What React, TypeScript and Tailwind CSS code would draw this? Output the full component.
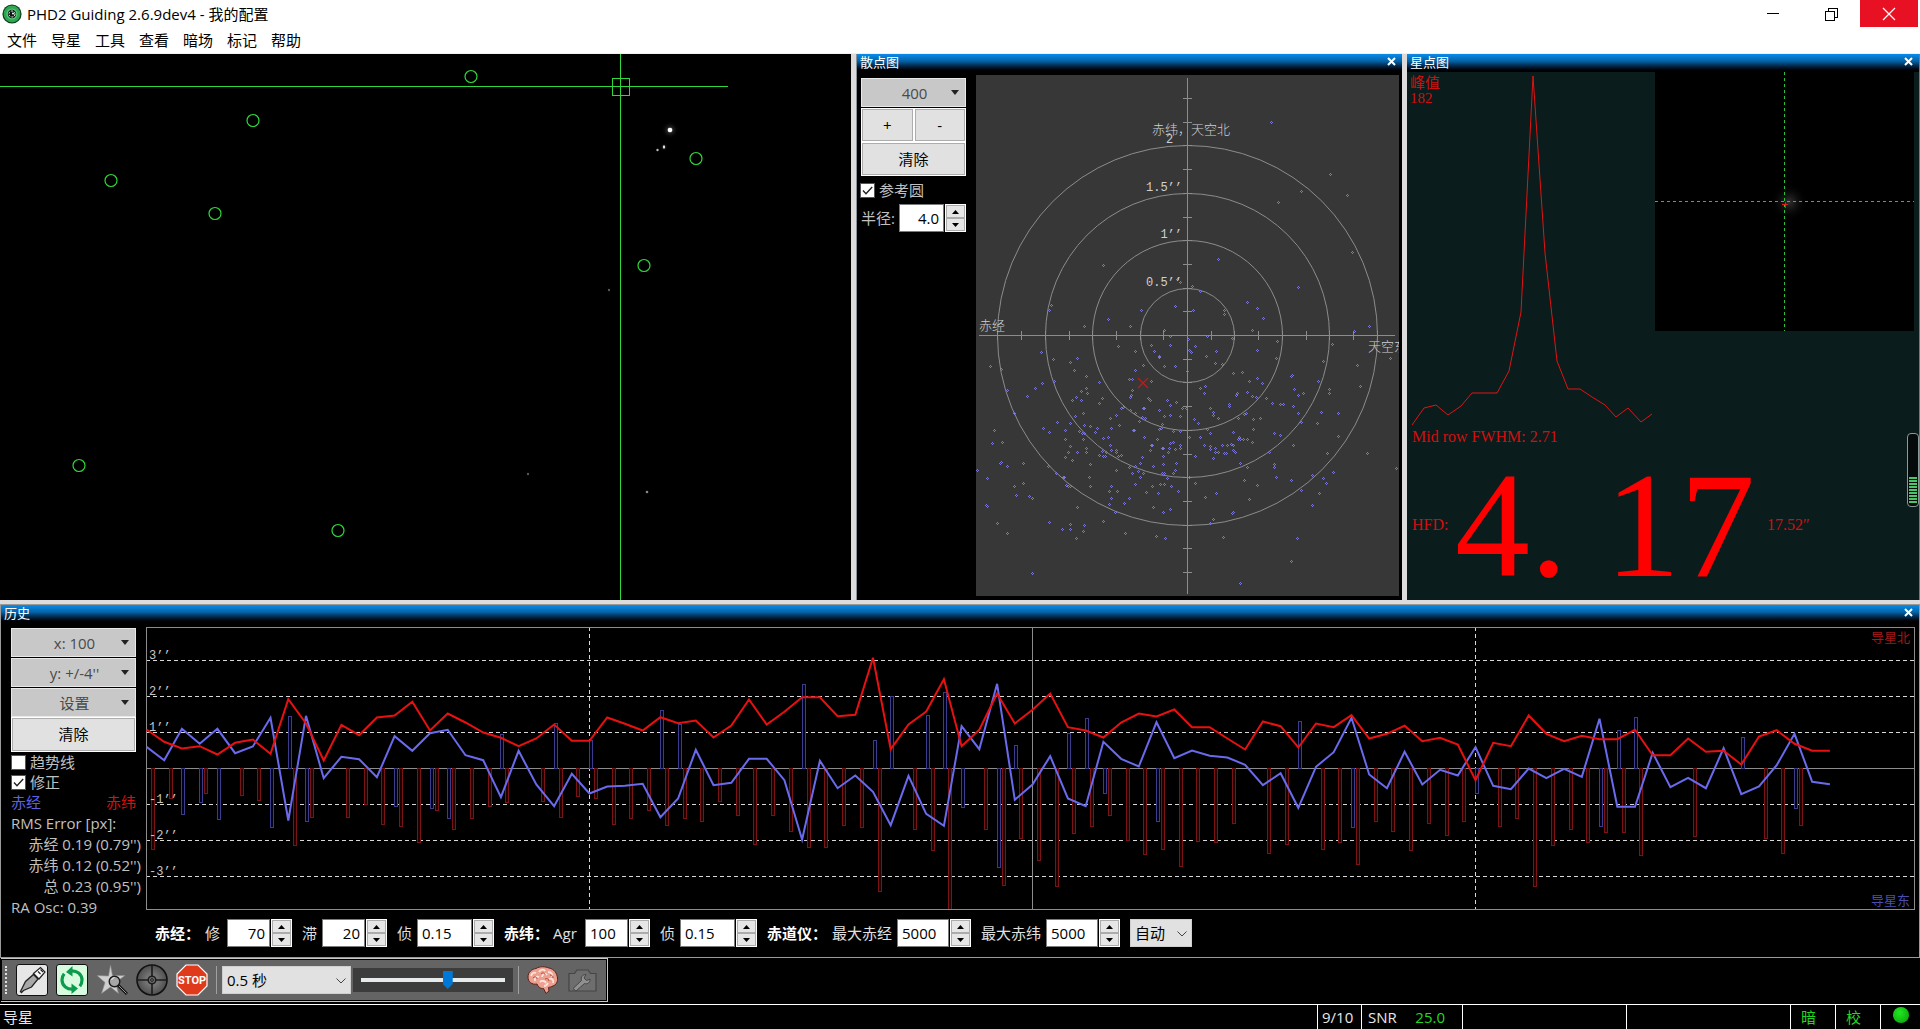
import React from "react";

const ui = "font-['Open_Sans','Noto_Sans_CJK_SC',sans-serif]";

/* ---------- shared controls ---------- */

function Caption({ title }: { title: string }) {
  return (
    <header className="flex h-[18px] shrink-0 items-start justify-between bg-linear-to-b from-[#0a8cea] via-[#0562a6] via-40% to-black pr-1 pl-[3px] text-white">
      <h2 className="text-[13px] leading-4 font-normal">{title}</h2>
      <button type="button" aria-label={`关闭${title}`} className="mt-0.5 size-3 cursor-default">
        <svg viewBox="0 0 12 12" className="size-3" stroke="#fff" strokeWidth="2">
          <path d="M2 2l7 7M9 2l-7 7" />
        </svg>
      </button>
    </header>
  );
}

function DropButton({ label }: { label: string }) {
  return (
    <button type="button" className="flex h-[29px] w-full items-center border border-[#e8e8e8] bg-[#c8c8c8] leading-6 text-[#4a4a4a]">
      <span className="flex-1 pl-4 text-center">{label}</span>
      <svg viewBox="0 0 8 5" className="mr-1.5 h-[5px] w-2" fill="#222">
        <path d="M0 0h8L4 5z" />
      </svg>
    </button>
  );
}

function PlainButton({ children, className = "" }: { children: React.ReactNode; className?: string }) {
  return (
    <button type="button" className={`flex items-center justify-center border border-white bg-[#e1e1e1] text-black inset-ring inset-ring-[#adadad] ${className}`}>
      {children}
    </button>
  );
}

function Check({ label, checked = false }: { label: string; checked?: boolean }) {
  return (
    <label className="flex h-5 items-center gap-1 leading-5 text-[#c0c0c0]">
      <span className="relative size-[15px]">
        <input type="checkbox" defaultChecked={checked} className="peer block size-[15px] appearance-none border border-[#555] bg-white" />
        <svg viewBox="0 0 15 15" className="pointer-events-none absolute top-0 left-0 hidden size-[15px] peer-checked:block" fill="none" stroke="#222" strokeWidth="1.4">
          <path d="M3 7.5l3 3.2L12.2 4" />
        </svg>
      </span>
      {label}
    </label>
  );
}

function Spin({ name, value, width, right = false }: { name: string; value: string; width: string; right?: boolean }) {
  return (
    <span className="flex h-7 gap-px">
      <input
        type="text"
        aria-label={name}
        defaultValue={value}
        className={`h-7 border border-[#7a7a7a] bg-white px-1 text-black ${width} ${right ? "text-right" : ""}`}
      />
      <span className="flex w-[21px] flex-col border border-white bg-[#e6e6e6]">
        <button type="button" aria-label={`${name} 增加`} className="flex flex-1 items-center justify-center border border-[#acacac]">
          <svg viewBox="0 0 7 4" className="h-1 w-[7px]"><path d="M0 4h7L3.5 0z" /></svg>
        </button>
        <button type="button" aria-label={`${name} 减少`} className="flex flex-1 items-center justify-center border border-[#acacac]">
          <svg viewBox="0 0 7 4" className="h-1 w-[7px]"><path d="M0 0h7L3.5 4z" /></svg>
        </button>
      </span>
    </span>
  );
}

function Select({ name, options, className }: { name: string; options: string[]; className: string }) {
  return (
    <span className={`relative ${className}`}>
      <select aria-label={name} className="h-full w-full appearance-none border border-[#cfcfcf] bg-[#e1e1e1] pl-1 leading-6 text-black">
        {options.map((o) => (
          <option key={o}>{o}</option>
        ))}
      </select>
      <svg viewBox="0 0 10 6" className="pointer-events-none absolute top-3 right-[5px] h-1.5 w-2.5" fill="none" stroke="#444">
        <path d="M.5.5L5 5 9.5.5" />
      </svg>
    </span>
  );
}

/* ---------- title bar and menu ---------- */

function TitleBar() {
  return (
    <header className="flex h-7 shrink-0 bg-white text-black">
      <div className="flex flex-1 items-center gap-[5px] pl-0.5">
        <svg viewBox="0 0 20 20" className="size-5">
          <circle cx="10" cy="10" r="9.6" fill="#0b3d1c" />
          <circle cx="10" cy="10" r="8.4" fill="#2fa552" />
          <circle cx="10" cy="10" r="5.6" fill="#57c878" />
          <circle cx="10" cy="10" r="4.2" fill="#0a1a10" />
          <circle cx="10" cy="10" r="3" fill="none" stroke="#fff" strokeWidth="1" strokeDasharray="2 1.2" />
          <circle cx="11" cy="9.5" r="1" fill="#fff" />
        </svg>
        <h1 className="text-[15px] leading-6 font-normal">PHD2 Guiding 2.6.9dev4 - 我的配置</h1>
      </div>
      <button type="button" aria-label="最小化" className="flex w-[58px] items-center justify-center">
        <svg viewBox="0 0 12 12" className="size-3" stroke="#000" shapeRendering="crispEdges"><path d="M0 5.5h12" /></svg>
      </button>
      <button type="button" aria-label="还原" className="flex w-[58px] items-center justify-center">
        <svg viewBox="0 0 13 13" className="size-[13px]" fill="none" stroke="#000" shapeRendering="crispEdges">
          <path d="M.5 3.5h9v9h-9zM3 3V.5h9.500v9H10" />
        </svg>
      </button>
      <button type="button" aria-label="关闭" className="mr-0.5 flex h-[27px] w-[58px] items-center justify-center bg-[#e81123]">
        <svg viewBox="0 0 14 14" className="size-3.5" stroke="#fff" strokeWidth="1.2"><path d="M1 1l12 12M13 1L1 13" /></svg>
      </button>
    </header>
  );
}

function Menu() {
  return (
    <nav className="flex h-[26px] shrink-0 items-center gap-3.5 border-b border-[#f0f0f0] bg-white pb-px pl-[7px] text-black">
      {["文件", "导星", "工具", "查看", "暗场", "标记", "帮助"].map((m) => (
        <button key={m} type="button" className="leading-6">{m}</button>
      ))}
    </nav>
  );
}

/* ---------- camera view ---------- */

const STARS = [[471, 22], [253, 66], [111, 126], [215, 159], [696, 104], [644, 211], [79, 411], [338, 476]];

function CameraView() {
  return (
    <section aria-label="相机图像" className="min-w-0 flex-1 overflow-hidden bg-black">
      <svg viewBox="0 0 851 546" preserveAspectRatio="xMinYMin slice" className="h-full w-full" fill="none">
        <defs>
          <radialGradient id="halo">
            <stop offset="0" stopColor="#fff" stopOpacity=".55" />
            <stop offset=".4" stopColor="#888" stopOpacity=".2" />
            <stop offset="1" stopColor="#000" stopOpacity="0" />
          </radialGradient>
        </defs>
        <circle cx="670" cy="76" r="9" fill="url(#halo)" />
        <circle cx="670" cy="76" r="2.300" fill="#fff" />
        <circle cx="664" cy="93" r="4" fill="url(#halo)" />
        <ellipse cx="664" cy="93" rx="1" ry="1.700" fill="#eee" />
        <circle cx="657.5" cy="96" r="1.200" fill="#bbb" />
        <circle cx="609" cy="236" r="1.200" fill="#555" />
        <circle cx="528" cy="420" r="1.200" fill="#555" />
        <circle cx="647" cy="438" r="1.300" fill="#888" />
        <g stroke="#2fd83a" shapeRendering="crispEdges">
          <path d="M0 32.5H728M620.5 0V546" />
          <rect x="612.5" y="24.500" width="17" height="17" />
        </g>
        <g stroke="#2fd83a" strokeWidth="1.200">
          {STARS.map(([x, y]) => <circle key={x} cx={x} cy={y + 0.5} r="6" />)}
        </g>
      </svg>
    </section>
  );
}

/* ---------- scatter plot ---------- */

const SCATTER_UNIT = 2.851;
const SCATTER =
  "1199,204 1368,354 1285,401 1418,412 1221,432 1432,577 722,614 1048,597 1276,674 933,652 942,662 976,672 997,688 574,726 566,742 828,742 925,731 979,742 1133,717 1161,734 1065,742 1065,753 1176,763 734,768 668,788 797,788 896,797 911,814 1017,814 1147,797 1436,802 1479,788 1090,822 1216,828 962,824 763,845 811,859 857,842 866,859 911,840 982,845 1042,859 1159,854 1375,839 544,862 578,882 628,890 648,879 400,902 431,909 637,913 880,874 881,873 836,897 811,913 896,902 925,902 1014,871 965,854 973,862 1039,893 1060,894 1213,879 1347,885 1444,897 1538,879 960,916 674,930 711,947 794,937 805,939 859,942 1093,922 1116,919 1136,942 1161,934 1173,948 1257,928 1261,925 1333,942 1453,957 580,943 546,950 526,962 448,968 503,985 657,972 674,962 676,979 643,988 634,999 657,999 709,1005 717,993 805,970 800,982 799,990 849,991 854,999 903,999 928,1002 913,1013 997,962 1013,957 1008,979 1102,979 1099,983 1133,976 1145,987 1156,988 1187,993 1204,1005 1225,1008 1233,1010 1262,1016 1267,967 1276,982 1290,979 1364,967 1366,979 779,1017 773,1021 797,1026 811,1034 834,1020 839,1021 831,1045 823,1057 842,1048 757,1039 740,1050 665,1036 640,1042 626,1062 468,1036 591,1059 882,1027 896,1044 911,1039 945,1019 957,1021 942,1042 1027,1021 1036,1040 1048,1049 1034,1033 1079,1008 1079,1014 1128,1034 1122,1038 1107,1048 1148,1053 1170,1050 1276,1034 1344,1033 1390,1036 1330,1062 1285,1061 980,1053 991,1062 888,1065 882,1079 886,1077 808,1083 809,1084 745,1076 766,1070 705,1076 683,1073 668,1070 551,1076 566,1090 411,1084 406,1121 434,1116 614,1084 614,1110 652,1087 660,1093 665,1110 668,1093 697,1090 722,1107 734,1104 740,1127 729,1145 722,1156 743,1139 757,1139 757,1147 771,1154 763,1156 839,1102 874,1110 857,1127 862,1127 854,1140 888,1133 893,1133 908,1133 911,1121 925,1136 940,1125 940,1133 922,1116 922,1087 942,1087 905,1147 893,1157 965,1102 997,1102 1017,1079 1025,1093 1093,1090 1110,1104 1113,1109 1121,1109 1133,1110 1107,1110 1145,1116 1093,1127 1093,1139 1085,1122 1074,1127 1060,1127 1039,1133 1050,1147 1041,1146 1027,1136 1027,1128 1008,1127 1071,1150 1096,1147 1065,1149 1036,1164 982,1156 1150,1079 1210,1093 1227,1098 1390,1099 1264,1125 1195,1145 1361,1150 1473,1150 1557,1192 626,1130 622,1147 614,1161 632,1170 646,1147 674,1133 674,1147 711,1155 717,1142 731,1147 726,1157 426,1178 431,1173 446,1187 494,1178 361,1197 390,1221 494,1233 468,1244 474,1267 511,1270 518,1278 388,1298 389,1299 563,1187 586,1207 608,1217 609,1218 617,1241 628,1244 622,1242 683,1181 680,1218 683,1244 757,1196 794,1190 831,1159 826,1176 811,1187 820,1201 805,1207 826,1216 834,1207 811,1236 865,1187 893,1181 888,1207 894,1207 903,1221 928,1176 925,1196 922,1207 885,1236 896,1238 916,1244 936,1256 862,1244 845,1261 877,1264 965,1216 982,1233 1113,1178 1133,1190 1210,1181 1213,1216 1124,1227 1161,1241 1256,1227 1285,1253 1316,1210 1349,1221 1358,1235 1376,1204 1338,1264 1316,1296 1136,1281 1042,1264 1011,1273 1093,1316 1090,1321 1036,1336 1025,1347 1062,1387 745,1244 737,1258 760,1258 743,1278 737,1293 780,1290 794,1276 754,1318 722,1342 865,1304 893,1318 913,1307 648,1304 668,1353 665,1372 643,1392 628,1350 626,1364 603,1364 568,1344 420,1347 448,1376 783,1376 871,1384 899,1390 1273,1390 1256,1458 1113,1518 518,1492 1210,1188"
    .split(" ")
    .map((p) => p.split(",").map(Number));

const scatterPath = SCATTER.map(([px, py]) => {
  const x = Math.round((px - 359) / SCATTER_UNIT);
  const y = Math.round((py - 71) / SCATTER_UNIT);
  return `M${x} ${y - 1}h1v1h-1zM${x - 1} ${y}h1v1h-1zM${x + 1} ${y}h1v1h-1zM${x} ${y + 1}h1v1h-1z`;
}).join("");

const TICKS = [-10, -9, -7, -6, -5, -3, -2, -1, 1, 2, 3, 5, 6, 7, 9, 10, -8, -4, 4, 8];

function ScatterPanel() {
  return (
    <section aria-label="散点图" className="flex w-[546px] shrink-0 flex-col border-l border-[#8a929a] bg-black">
      <Caption title="散点图" />
      <div className="flex min-h-0 flex-1 pt-[3px] pb-1">
        <div className="flex w-[119px] shrink-0 flex-col pt-[3px]">
          <div className="mr-2.5 ml-1 flex flex-col">
            <DropButton label="400" />
            <div className="mt-px grid grid-cols-2">
              <PlainButton className="h-[34px]">+</PlainButton>
              <PlainButton className="h-[34px]">-</PlainButton>
            </div>
            <PlainButton className="h-[34px] w-full">清除</PlainButton>
          </div>
          <div className="mt-1 ml-[3px]">
            <Check label="参考圆" checked />
          </div>
          <div className="mt-1 ml-1 flex items-center gap-1 text-[#c0c0c0]">
            <span className="w-[34px] leading-7 whitespace-nowrap">半径:</span>
            <Spin name="半径" value="4.0" width="w-[45px]" right />
          </div>
        </div>
        <div className="mr-[3px] min-w-0 flex-1 overflow-hidden bg-[#373737]">
          <svg viewBox="0 0 423 521" className="h-full w-full" preserveAspectRatio="xMidYMid meet">
            <g fill="none" stroke="#8c8c8c">
              {[47, 95, 142, 190].map((r) => <circle key={r} cx="211.500" cy="260.500" r={r} />)}
              <g shapeRendering="crispEdges">
                <path d="M211.500 3V519M3 260.500H419" />
                {TICKS.map((t) => {
                  const d = Math.round(t * 23.7);
                  return (
                    <React.Fragment key={t}>
                      <path d={`M207 ${260.5 + d}h9`} />
                      {Math.abs(t) < 9 && <path d={`M${211.5 + d} 256v9`} />}
                    </React.Fragment>
                  );
                })}
              </g>
            </g>
            <path d={scatterPath} fill="#7a76d8" shapeRendering="crispEdges" />
            <path d="M162 303l10 10M172 303l-10 10" stroke="#c01a1a" strokeWidth="1.200" />
            <g fill="#d0d0d0" fontFamily="'Liberation Mono','Noto Sans CJK SC',monospace" fontSize="12">
              <text x="190" y="68">2</text>
              <text x="206" y="116" textAnchor="end">1.5’’</text>
              <text x="206" y="163" textAnchor="end">1’’</text>
              <text x="206" y="211" textAnchor="end">0.5’’</text>
            </g>
            <g fill="#d0d0d0" fontFamily="'Noto Sans CJK SC',sans-serif" fontSize="13" fontWeight="300">
              <text x="176" y="59">赤纬，天空北</text>
              <text x="3" y="255">赤经</text>
              <text x="392" y="276">天空东</text>
            </g>
          </svg>
        </div>
      </div>
    </section>
  );
}

/* ---------- star profile ---------- */

function StarPanel() {
  return (
    <section aria-label="星点图" className="relative flex w-[513px] shrink-0 flex-col border-r border-[#777] bg-[#0a1c1b] text-[#f00808]">
      <Caption title="星点图" />
      <div className="flex">
        <div className="relative min-w-0 flex-1">
          <p className="absolute top-1 left-[3px] font-['Liberation_Serif','Noto_Sans_CJK_SC',serif] text-[15px] leading-[15px] text-[#d01010]">
            峰值
            <br />
            182
          </p>
          <svg viewBox="0 0 248 357" className="h-[357px] w-full" fill="none" stroke="#e01414">
            <path d="M5 353L17 336L29 333L41 343L54 334L65 321L78 321L90 321L102 299L114 240L126 4L138 181L150 289L161 317L173 317L185 325L198 333L209 345L221 336L234 350L245 342" />
          </svg>
        </div>
        <svg viewBox="0 0 259 259" className="mr-[5px] h-[259px] w-[259px] shrink-0 bg-black">
          <defs>
            <radialGradient id="glow">
              <stop offset="0" stopColor="#333" />
              <stop offset="1" stopColor="#000" stopOpacity="0" />
            </radialGradient>
          </defs>
          <circle cx="134" cy="130" r="19" fill="url(#glow)" />
          <path d="M0 129.500H259M129.500 0V259" stroke="#2fc03a" strokeDasharray="3 3" shapeRendering="crispEdges" />
          <path d="M127 132.500h6M130.500 130v6" stroke="#e81a1a" shapeRendering="crispEdges" />
        </svg>
      </div>
      <p className="pl-[5px] font-['Liberation_Serif',serif] text-base leading-4 text-[#d01010]">Mid row FWHM: 2.71</p>
      <div className="mt-7 flex items-center font-['Liberation_Serif',serif] text-base text-[#d01010]">
        <span className="w-[48px] pl-[5px]">HFD:</span>
        <strong className="flex text-[150px] leading-[104px] font-normal text-[#ff0000]">
          {["4", ".", "1", "7"].map((c) => (
            <span key={c} className="w-[75px]">{c}</span>
          ))}
        </strong>
        <span className="pl-3">17.52″</span>
      </div>
      <div className="absolute right-0 bottom-[93px] flex h-[74px] w-3 flex-col justify-end gap-px rounded-sm border border-[#8a9a98] bg-black/60 p-px pb-[3px]">
        {Array.from({ length: 9 }, (_, i) => (
          <span key={i} className="h-0.5 bg-[#4cc46a]" />
        ))}
      </div>
    </section>
  );
}

/* ---------- history graph ---------- */

const STEP = 17.72;
const toY = (v: number) => (v - 97) / 3 + 0.5;

const DEC = [403, 440, 460, 453, 478, 443, 433, 476, 312, 385, 496, 389, 420, 367, 361, 320, 406, 355, 382, 412, 428, 453, 430, 388, 437, 437, 367, 386, 406, 366, 384, 376, 427, 391, 313, 388, 350, 306, 306, 363, 359, 188, 462, 388, 349, 252, 453, 404, 295, 385, 344, 295, 396, 406, 427, 382, 355, 364, 343, 396, 396, 430, 463, 379, 393, 457, 385, 396, 360, 430, 416, 392, 438, 428, 448, 555, 443, 453, 361, 416, 438, 422, 432, 432, 404, 480, 480, 430, 470, 467, 508, 424, 405, 446, 467, 467];
const RA = [455, 495, 401, 446, 401, 474, 454, 368, 676, 362, 549, 485, 492, 546, 423, 467, 414, 404, 480, 495, 606, 467, 568, 633, 536, 595, 574, 572, 566, 666, 610, 464, 570, 563, 491, 491, 555, 733, 497, 579, 541, 590, 690, 542, 656, 692, 393, 462, 266, 614, 568, 483, 610, 633, 440, 491, 514, 381, 489, 466, 482, 487, 509, 570, 534, 638, 515, 471, 368, 538, 579, 470, 568, 524, 541, 456, 572, 582, 520, 549, 521, 545, 371, 635, 635, 473, 576, 548, 579, 459, 597, 574, 510, 416, 560, 567];

const RA_PULSES: [number, number][] = [[2, 659], [3, 623], [4, 674], [7, 697], [8, 364], [9, 680], [14, 634], [16, 640], [17, 671], [20, 418], [23, 385], [25, 436], [29, 346], [30, 388], [37, 268], [41, 436], [42, 306], [44, 361], [45, 292], [46, 637], [48, 818], [49, 451], [52, 415], [53, 370], [54, 596], [57, 680], [65, 379], [68, 697], [75, 596], [82, 695], [83, 406], [84, 367], [90, 427], [93, 640]];
const DEC_PULSES: [number, number][] = [[0, 764], [1, 611], [3, 597], [5, 602], [6, 617], [8, 752], [9, 668], [11, 668], [12, 629], [13, 688], [14, 695], [15, 743], [16, 647], [17, 704], [18, 671], [19, 635], [20, 623], [22, 620], [23, 668], [24, 605], [25, 611], [26, 688], [27, 671], [28, 647], [29, 692], [30, 671], [31, 680], [32, 620], [33, 662], [34, 748], [35, 662], [36, 710], [37, 758], [38, 758], [39, 692], [40, 698], [41, 890], [43, 704], [44, 767], [45, 943], [47, 704], [48, 872], [49, 731], [50, 797], [51, 875], [52, 716], [53, 695], [54, 662], [55, 737], [56, 779], [57, 764], [58, 815], [59, 740], [60, 743], [61, 686], [63, 776], [64, 749], [66, 764], [67, 743], [68, 809], [69, 680], [70, 710], [71, 767], [72, 686], [73, 722], [74, 680], [76, 695], [77, 671], [78, 875], [79, 752], [80, 704], [81, 743], [82, 713], [83, 713], [84, 782], [87, 725], [91, 731], [92, 776], [93, 692]];

const linePath = (d: number[]) => d.map((v, i) => `${i ? "L" : "M"}${(i * STEP + 0.5).toFixed(1)} ${toY(v).toFixed(1)}`).join("");
const pulsePath = (d: [number, number][], shift: number) =>
  d.map(([i, v]) => `M${Math.round(i * STEP) + shift + 0.5} 141.500h3V${Math.round(toY(v)) - 0.5}h-3z`).join("");

function HistoryGraph() {
  return (
    <svg viewBox="0 0 1769 283" preserveAspectRatio="none" className="h-[283px] min-w-0 flex-1" fill="none">
      <g shapeRendering="crispEdges">
        {[33, 69, 105, 177, 213, 249].map((y) => (
          <path key={y} d={`M0 ${y + 0.5}H1769`} stroke="#d8d8d8" strokeDasharray="4 3" />
        ))}
        <path d="M443.500 0V283M1329.500 0V283" stroke="#d8d8d8" strokeDasharray="4 3" />
        <path d="M0 141.500H1769M886.500 0V283" stroke="#8c8c8c" />
        <path d={pulsePath(RA_PULSES, 0)} stroke="#3c3c8c" fill="#00001c" />
        <path d={pulsePath(DEC_PULSES, 5)} stroke="#7a1414" fill="#1e0000" />
        <rect x=".5" y=".5" width="1768" height="282" stroke="#8c8c8c" />
      </g>
      <g fill="#c8c8c8" fontFamily="'Liberation Mono',monospace" fontSize="12">
        <text x="3" y="32">3’’</text>
        <text x="3" y="68">2’’</text>
        <text x="3" y="104">1’’</text>
        <text x="3" y="176">-1’’</text>
        <text x="3" y="212">-2’’</text>
        <text x="3" y="248">-3’’</text>
      </g>
      <path d={linePath(RA)} stroke="#6a6aee" strokeWidth="2" />
      <path d={linePath(DEC)} stroke="#e81010" strokeWidth="2" />
      <g fontFamily="'Noto Sans CJK SC',sans-serif" fontSize="13" textAnchor="end">
        <text x="1764" y="15" fill="#a01818">导星北</text>
        <text x="1764" y="278" fill="#4c4cb0">导星东</text>
      </g>
    </svg>
  );
}

function HistoryPanel() {
  return (
    <section aria-label="历史" className="flex shrink-0 flex-col border-x border-t border-b border-[#9a9a9a] bg-black text-[#c0c0c0]">
      <Caption title="历史" />
      <div className="flex pt-1 pr-1">
        <div className="flex w-[145px] shrink-0 flex-col pt-px">
          <div className="mr-2.5 ml-2.5 flex flex-col">
            <div className="flex flex-col gap-px">
              <DropButton label="x: 100" />
              <DropButton label={"y: +/-4''"} />
              <DropButton label="设置" />
            </div>
            <PlainButton className="h-[35px] w-full">清除</PlainButton>
            <div>
              <Check label="趋势线" />
              <Check label="修正" checked />
            </div>
            <div className="flex justify-between leading-[21px]">
              <span className="text-[#6060e0]">赤经</span>
              <span className="text-[#d81010]">赤纬</span>
            </div>
          </div>
          <div className="ml-2.5 leading-[21px]">
            <p>RMS Error [px]:</p>
            <div className="pr-[5px] text-right">
              <p>赤经 0.19 (0.79'')</p>
              <p>赤纬 0.12 (0.52'')</p>
              <p>总 0.23 (0.95'')</p>
            </div>
            <p>RA Osc: 0.39</p>
          </div>
        </div>
        <div className="min-w-0 flex-1">
          <div className="flex"><HistoryGraph /></div>
          <div className="mt-[9px] mb-2.5 flex items-center pl-[9px] text-[#e0e0e0]">
            <b className="w-[50px] leading-7 text-white">赤经：</b>
            <span className="w-[22px] leading-7">修</span>
            <Spin name="赤经修" value="70" width="w-[43px]" right />
            <span className="ml-2.5 w-5 leading-7">滞</span>
            <Spin name="赤经滞" value="20" width="w-[43px]" right />
            <span className="ml-2.5 w-5 leading-7">侦</span>
            <Spin name="赤经侦" value="0.15" width="w-[55px]" />
            <b className="ml-2.5 w-[49px] leading-7 text-white">赤纬：</b>
            <span className="w-8 leading-7">Agr</span>
            <Spin name="赤纬 Agr" value="100" width="w-[43px]" />
            <span className="ml-2.5 w-5 leading-7">侦</span>
            <Spin name="赤纬侦" value="0.15" width="w-[55px]" />
            <b className="ml-2.5 w-[65px] leading-7 text-white">赤道仪：</b>
            <span className="w-[65px] leading-7">最大赤经</span>
            <Spin name="最大赤经" value="5000" width="w-[52px]" />
            <span className="ml-2.5 w-[65px] leading-7">最大赤纬</span>
            <Spin name="最大赤纬" value="5000" width="w-[52px]" />
            <Select name="赤纬模式" options={["自动", "关", "北", "南"]} className="ml-2.5 h-7 w-[62px]" />
          </div>
        </div>
      </div>
    </section>
  );
}

/* ---------- toolbar ---------- */

function ConnectIcon() {
  return (
    <svg viewBox="0 0 32 32" className="size-8">
      <rect x=".5" y=".5" width="31" height="31" rx="2.500" fill="#e6e6e6" stroke="#111" />
      <path d="M4.500 27.500l5-10 8-7 4.500 4.500-6.500 8-8 3.500-2 2z" fill="#a8a8a8" stroke="#222" strokeWidth="1.300" />
      <path d="M17.500 9.500l7-6 4.500 4.500-6 7z" fill="#fafafa" stroke="#222" strokeWidth="1.200" />
      <path d="M22 7.500l2.500 2.500M24.500 5.500L27 8" stroke="#222" strokeWidth="1.200" />
    </svg>
  );
}

function LoopIcon() {
  return (
    <svg viewBox="0 0 32 32" className="size-8">
      <rect x=".5" y=".5" width="31" height="31" rx="2.500" fill="#d8fbe0" stroke="#111" />
      <g fill="none" stroke="#0c9a4c" strokeWidth="3.200">
        <path d="M14 7C21 6 26 10.500 26 16c0 2.500-.8 4.500-2.200 6.200" />
        <path d="M18 25C11 26 6 21.500 6 16c0-2.500.8-4.500 2.200-6.200" />
      </g>
      <path d="M16.500 2v10.500L10 8zM15.500 19.500V30L22 24.500z" fill="#0c9a4c" />
    </svg>
  );
}

function StarFindIcon() {
  return (
    <svg viewBox="0 0 32 32" className="size-8">
      <path d="M14.500 1l2 10.500H29l-9.500 7 3 11L14.500 23 5.500 29.500 9 18.500 1 11.500l11.500.5z" fill="#cfcfcf" stroke="#888" strokeWidth=".6" />
      <circle cx="18.500" cy="17.500" r="5.300" fill="#a6a6a6" stroke="#1a1a1a" strokeWidth="1.400" />
      <path d="M15.500 16a4 4 0 0 1 3-2.500" stroke="#eee" fill="none" />
      <path d="M22.500 21.500L31 30" stroke="#111" strokeWidth="3" />
      <path d="M23 22L30.500 29.500" stroke="#999" strokeWidth="1" />
    </svg>
  );
}

function GuideIcon() {
  return (
    <svg viewBox="0 0 32 32" className="size-8">
      <defs>
        <radialGradient id="lens">
          <stop offset="0" stopColor="#8c8c8c" />
          <stop offset="1" stopColor="#4e4e4e" />
        </radialGradient>
      </defs>
      <circle cx="16" cy="16" r="15" fill="url(#lens)" stroke="#111" strokeWidth="1.600" />
      <path d="M16 1v30M1 16h30" stroke="#1c1c1c" strokeWidth="1.600" />
      <circle cx="16" cy="16" r="3.800" fill="#6e6e6e" stroke="#1c1c1c" strokeWidth="1.600" />
      <circle cx="16" cy="16" r="1.400" fill="none" stroke="#222" />
    </svg>
  );
}

function StopIcon() {
  return (
    <svg viewBox="0 0 32 32" className="size-8">
      <path d="M10 1h12l9 9v12l-9 9H10l-9-9V10z" fill="#e03a1c" stroke="#fff" strokeWidth="1.200" />
      <text x="16" y="20" textAnchor="middle" fontFamily="Roboto,'Liberation Sans',sans-serif" fontSize="11" fontWeight="700" fill="#fff">STOP</text>
    </svg>
  );
}

function BrainIcon() {
  return (
    <svg viewBox="0 0 32 32" className="size-8">
      <path d="M1 13C1 8 5 5 9 4.500 13 2 18 2.500 22 4c5 1 8 5 8.500 10 .5 4-1.500 7-4.500 8-2 1-3 1-4.500 1.500L22 27l-3 2.500-2.500-5C14 25 11 23 10 20 5 21 1 18 1 13z" fill="#eea090" stroke="#5c2018" strokeWidth="1" />
      <path d="M4 12c1-3 3-4 5-3M8 17c-1-3 2-5 4-4M12 8c2-3 5-3 6-1M15 13c0-3 4-4 5-2M13 18c2-2 5-1 6 1M21 8c3 0 5 2 4 5M22 15c3-1 5 1 4 4M17 22c2 0 3-1 4-3" fill="none" stroke="#fbe4dc" strokeWidth="1.800" />
      <path d="M6 14c2-2 4-1 4 1M14 10c2-2 4-1 4 1M18 15c2-1 4 0 4 2M23 11c2 0 3 1 3 3" fill="none" stroke="#b04838" strokeWidth="1" />
    </svg>
  );
}

function CameraIcon() {
  return (
    <svg viewBox="0 0 32 32" className="size-8">
      <path d="M2 9.500h5.500L10 6h11l2.500 3.500H29V27H2z" fill="#6e6e6e" stroke="#454545" strokeWidth="1.200" />
      <path d="M6 24.500l8.500-8c-1-3.500 1-6 4.500-6l-2 3.500 2.500 2.500 3.500-1.500c.5 3.500-2.500 5.500-5.500 4.500L9 27z" fill="#909090" stroke="#454545" />
    </svg>
  );
}

const TOOLS: [string, () => React.ReactElement][] = [
  ["连接设备", ConnectIcon],
  ["循环曝光", LoopIcon],
  ["自动选星", StarFindIcon],
  ["开始导星", GuideIcon],
  ["停止", StopIcon],
];

function Toolbar() {
  return (
    <div className="flex h-[46px] shrink-0 bg-black pl-px">
      <div role="toolbar" aria-label="主工具栏" className="flex h-11 items-center border-t border-r border-b border-[#c8c8c8] bg-[#646464] pr-2 inset-ring inset-ring-black">
        <span className="ml-1 h-7 border-l-2 border-dotted border-[#e0e0e0]" />
        <div className="ml-[9px] flex gap-2">
          {TOOLS.map(([name, Icon]) => (
            <button key={name} type="button" aria-label={name}><Icon /></button>
          ))}
        </div>
        <span className="ml-2 h-7 w-px bg-[#a0a0a0]" />
        <Select name="曝光时间" options={["0.5 秒", "1.0 秒", "2.0 秒"]} className="ml-[5px] h-7 w-[129px]" />
        <div className="ml-0.5 flex h-6 w-40 items-center bg-[#3c3c3c] px-2">
          <input
            type="range"
            aria-label="伽马"
            defaultValue={61}
            className="h-1 w-full appearance-none bg-[#e7eaea] [&::-webkit-slider-thumb]:h-[18px] [&::-webkit-slider-thumb]:w-2.5 [&::-webkit-slider-thumb]:appearance-none [&::-webkit-slider-thumb]:bg-[#0078d7] [&::-webkit-slider-thumb]:[clip-path:polygon(0_0,100%_0,100%_72%,50%_100%,0_72%)]"
          />
        </div>
        <span className="mr-2 ml-[5px] h-7 w-px bg-[#a0a0a0]" />
        <div className="flex gap-2">
          <button type="button" aria-label="高级设置"><BrainIcon /></button>
          <button type="button" aria-label="相机设置"><CameraIcon /></button>
        </div>
      </div>
    </div>
  );
}

function StatusBar() {
  return (
    <footer className="flex h-[25px] shrink-0 items-stretch border-t border-white bg-black leading-6 text-[#e8e8e8]">
      <span className="flex-1 pl-[3px]">导星</span>
      <span className="w-11 border-l border-white pl-1">9/10</span>
      <span className="flex w-[101px] justify-between border-l border-white pr-[17px] pl-1.5">
        SNR <span className="text-[#22d822]">25.0</span>
      </span>
      <span className="w-[164px] border-l border-white" />
      <span className="w-[164px] border-l border-white" />
      <span className="w-[45px] border-l border-white pl-2.5 text-[#22d822]">暗</span>
      <span className="w-[45px] border-l border-white pl-2.5 text-[#22d822]">校</span>
      <span className="flex w-10 justify-center border-l border-white pt-0.5">
        <span className="size-4 rounded-full bg-radial-[at_40%_35%] from-[#20e820] to-[#0a9a0a]" />
      </span>
    </footer>
  );
}

export default function App() {
  return (
    <div className={`flex h-screen flex-col overflow-hidden bg-black text-[15px] ${ui}`}>
      <TitleBar />
      <Menu />
      <main className="flex min-h-0 flex-1 flex-col">
        <div className="flex min-h-0 flex-1 gap-[5px] bg-[#dcdcdc]">
          <CameraView />
          <ScatterPanel />
          <StarPanel />
        </div>
        <div className="h-1 shrink-0 bg-[#dcdcdc]" />
        <HistoryPanel />
      </main>
      <Toolbar />
      <StatusBar />
    </div>
  );
}
